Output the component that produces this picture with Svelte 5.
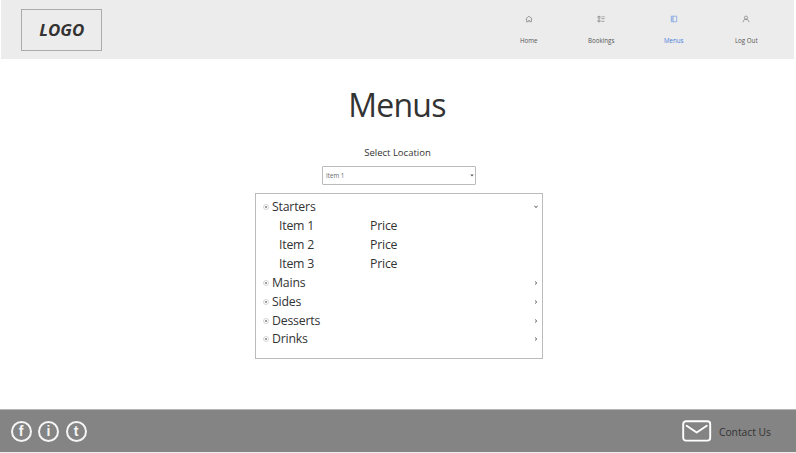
<script>
  const nav = [
    { label: 'Home', icon: 'home' },
    { label: 'Bookings', icon: 'grid' },
    { label: 'Menus', icon: 'panel', active: true },
    { label: 'Log Out', icon: 'user' }
  ];
  const items = ['Item 1', 'Item 2', 'Item 3'];
  const sections = [
    { name: 'Starters', open: true },
    { name: 'Mains' },
    { name: 'Sides' },
    { name: 'Desserts' },
    { name: 'Drinks' }
  ];
  const socials = ['f', 'i', 't'];
</script>

<div class="page">
  <header>
    <div class="logo"><span>LOGO</span></div>
    <nav>
      {#each nav as n}
        <div class="nav-item" class:active={n.active}>
          <svg width="8" height="8" viewBox="0 0 8 8" fill="none" stroke="currentColor" stroke-width="0.6">
            {#if n.icon === 'home'}
              <path d="M0.7 4 4 1.2 7.3 4M1.6 3.6V6.8H3.2V5.6H4.8V6.8H6.4V3.6" />
            {:else if n.icon === 'grid'}
              <path d="M1 1.4H3V3.2H1ZM1 5H3V6.8H1ZM4.4 1.7H5.6M6.2 1.7H7.6M4.4 3.6H7.6M4.4 6.3H7.4" />
            {:else if n.icon === 'panel'}
              <path d="M1.3 1.2H6.7V6.8H1.3ZM3.1 1.2V6.8M1.3 3H3M1.3 5H3" />
            {:else}
              <circle cx="4" cy="2.7" r="1.6" />
              <path d="M1 7.2C1.2 5.4 2.3 4.3 4 4.3S6.8 5.4 7 7.2" />
            {/if}
          </svg>
          <span>{n.label}</span>
        </div>
      {/each}
    </nav>
  </header>

  <main>
    <h1>Menus</h1>
    <div class="label">Select Location</div>
    <div class="select">
      <span>Item 1</span>
      <svg width="4" height="3" viewBox="0 0 4 3"><path d="M.3 .5H3.7L2 2.4Z" fill="#555" /></svg>
    </div>
    <div class="menu">
      {#each sections as s}
        <div class="row">
          <svg class="dot" width="6" height="6" viewBox="0 0 6 6">
            <circle cx="3" cy="3" r="2.5" fill="none" stroke="#c4c4c4" stroke-width="0.7" />
            <circle cx="3" cy="3" r="1.1" fill="#888" />
          </svg>
          <span class="name">{s.name}</span>
          <svg class="chev" width="4" height="4" viewBox="0 0 4 4" fill="none" stroke="#444" stroke-width="1">
            <path d={s.open ? 'M.4 1.1 2 2.4 3.6 1.1' : 'M1.2 .6 2.7 2 1.2 3.4'} />
          </svg>
        </div>
        {#if s.open}
          {#each items as item}
            <div class="row sub"><span class="item">{item}</span><span>Price</span></div>
          {/each}
        {/if}
      {/each}
    </div>
  </main>

  <footer>
    <div class="socials">
      {#each socials as s}
        <span class="social">{s}</span>
      {/each}
    </div>
    <div class="contact">
      <svg width="30" height="22" viewBox="0 0 30 22" fill="none" stroke="#fff" stroke-width="1.9" stroke-linejoin="round" stroke-linecap="round">
        <rect x="1.2" y="1.2" width="27" height="19.4" rx="2.8" />
        <path d="M4.6 5.7 14.7 12.5 24.8 5.7" />
      </svg>
      <span>Contact Us</span>
    </div>
  </footer>
</div>

<style>
  .page {
    width: 796px;
    height: 453px;
    display: flex;
    flex-direction: column;
    overflow: hidden;
    background: #fff;
    color: #333;
    font-family: 'Open Sans', 'Noto Sans', sans-serif;
  }
  header {
    box-sizing: border-box;
    height: 59px;
    margin: 0 2px 0 1px;
    padding: 9px 11.5px 0 20px;
    display: flex;
    justify-content: space-between;
    background: #ececec;
  }
  .logo {
    box-sizing: border-box;
    width: 81px;
    height: 42px;
    border: 1px solid #aaa;
    line-height: 41px;
    text-align: center;
    font-size: 15.5px;
    font-weight: 700;
    font-style: italic;
  }
  .logo span {
    display: inline-block;
    transform: scaleX(1.09);
  }
  nav {
    display: flex;
  }
  .nav-item {
    width: 72.5px;
    padding-top: 6px;
    display: flex;
    flex-direction: column;
    align-items: center;
    color: #555;
  }
  .nav-item svg {
    opacity: 0.85;
  }
  .nav-item span {
    margin-top: 13px;
    font-size: 6.2px;
    line-height: 10px;
  }
  .nav-item.active {
    color: #4a80dc;
  }
  main {
    height: 350px;
    display: flex;
    flex-direction: column;
    align-items: center;
  }
  h1 {
    margin: 24px 2px 0 0;
    font-size: 32px;
    line-height: 44px;
    font-weight: 400;
    letter-spacing: -0.8px;
  }
  .label {
    margin: 19px 0 0 -1px;
    font-size: 9.5px;
    line-height: 14px;
  }
  .select {
    box-sizing: border-box;
    width: 154px;
    height: 19px;
    margin: 6px 0 0 2px;
    padding: 0 1px 0 3px;
    display: flex;
    align-items: center;
    justify-content: space-between;
    border: 1px solid #bbb;
    border-radius: 1px;
    font-size: 6.2px;
    color: #666;
  }
  .menu {
    box-sizing: border-box;
    width: 288px;
    height: 166px;
    margin: 8px 0 0 2px;
    padding: 3px 4px 0 7px;
    border: 1px solid #bbb;
    font-size: 12.3px;
    letter-spacing: -0.2px;
  }
  .row {
    height: 19px;
    display: flex;
    align-items: center;
  }
  .row:last-child {
    height: 17px;
  }
  .dot {
    margin-right: 3px;
  }
  .name {
    flex: 1;
  }
  .sub {
    padding-left: 16px;
  }
  .item {
    width: 91px;
  }
  footer {
    box-sizing: border-box;
    height: 44px;
    padding: 0 25px 0 10.5px;
    display: flex;
    align-items: center;
    justify-content: space-between;
    border-top: 1px solid #b5b5b5;
    border-bottom: 1px solid #eee;
    background: #848484;
  }
  .socials {
    display: flex;
    gap: 6.5px;
    padding-top: 1px;
  }
  .social {
    box-sizing: border-box;
    width: 21px;
    height: 21px;
    border: 2px solid #f5f5f5;
    border-radius: 50%;
    line-height: 17px;
    text-align: center;
    font-family: 'Liberation Sans', Arial, sans-serif;
    font-size: 14px;
    font-weight: 700;
    color: #f5f5f5;
  }
  .contact {
    display: flex;
    align-items: center;
    gap: 7px;
    font-size: 10.3px;
  }
  .contact svg {
    margin-bottom: 1px;
  }
  .contact span {
    padding-top: 1px;
  }
</style>
